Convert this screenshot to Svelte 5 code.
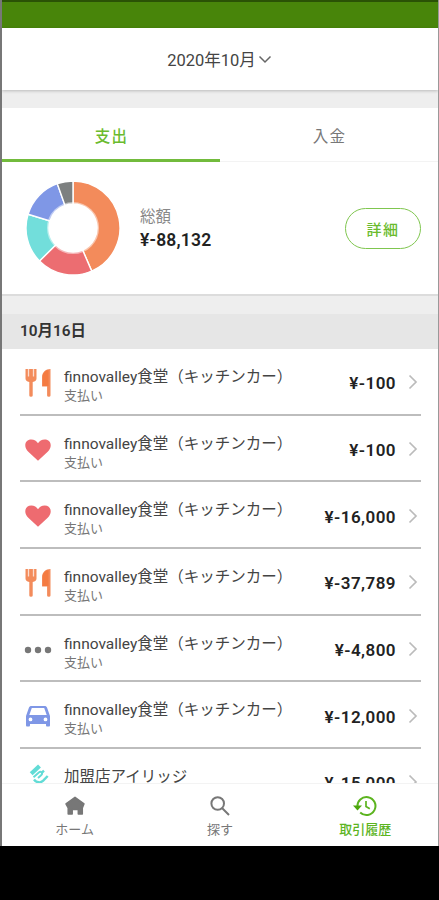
<script lang="ts">
  type IconName = 'meal' | 'heart' | 'dots' | 'car' | 'hand';

  interface Transaction {
    icon: IconName;
    name: string;
    kind?: string;
    amount: string;
  }

  const SHOP = 'finnovalley食堂（キッチンカー）';
  const PAYMENT = '支払い';

  const transactions: Transaction[] = [
    { icon: 'meal', name: SHOP, kind: PAYMENT, amount: '¥-100' },
    { icon: 'heart', name: SHOP, kind: PAYMENT, amount: '¥-100' },
    { icon: 'heart', name: SHOP, kind: PAYMENT, amount: '¥-16,000' },
    { icon: 'meal', name: SHOP, kind: PAYMENT, amount: '¥-37,789' },
    { icon: 'dots', name: SHOP, kind: PAYMENT, amount: '¥-4,800' },
    { icon: 'car', name: SHOP, kind: PAYMENT, amount: '¥-12,000' },
    { icon: 'hand', name: '加盟店アイリッジ', amount: '¥-15,000' },
  ];

  // Slice boundaries in degrees, clockwise from the top.
  const slices = [
    { from: 0, to: 156.5, color: '#f38b5b' },
    { from: 156.5, to: 225.5, color: '#ec6d71' },
    { from: 225.5, to: 287, color: '#72dedb' },
    { from: 287, to: 340.5, color: '#7f97e6' },
    { from: 340.5, to: 360, color: '#7d8080' },
  ];

  function point(deg: number, r: number) {
    const a = (deg * Math.PI) / 180;
    return `${47 + r * Math.sin(a)} ${47 - r * Math.cos(a)}`;
  }

  function arc(from: number, to: number) {
    return `M${point(from, 47)}A47 47 0 0 1 ${point(to, 47)}L${point(to, 24)}A24 24 0 0 0 ${point(from, 24)}Z`;
  }

  let tab = $state('out');
</script>

<div class="phone">
  <div class="status-bar"></div>
  <header class="month">
    <span>2020年10月</span>
    <svg width="14" height="9" viewBox="0 0 14 9"><path d="M1.5 1.5 7 7l5.5-5.5" fill="none" stroke="#666" stroke-width="1.5" /></svg>
  </header>

  <div class="tabs">
    <button class:active={tab === 'out'} onclick={() => (tab = 'out')}>支出</button>
    <button class:active={tab === 'in'} onclick={() => (tab = 'in')}>入金</button>
  </div>

  <section class="summary">
    <svg class="donut" width="94" height="94" viewBox="0 0 94 94">
      {#each slices as s}
        <path d={arc(s.from, s.to)} fill={s.color} stroke="#fff" stroke-width="1.4" />
      {/each}
      <circle cx="47" cy="47" r="24.5" fill="none" stroke="#fff" stroke-opacity="0.5" stroke-width="3" />
    </svg>
    <div class="total">
      <span class="total-label">総額</span>
      <span class="total-value">¥-88,132</span>
    </div>
    <button class="detail">詳細</button>
  </section>

  <h2 class="date">10月16日</h2>

  <ul class="list">
    {#each transactions as t}
      <li class="row">
        <span class="icon">
          {#if t.icon === 'meal'}
            <svg width="28" height="30" viewBox="0 0 28 30" fill="#f38b5b">
              <path d="M1.5 1h11v9.500c0 2-1.200 3-3.800 3.500v13.500q0 1.300-1.700 1.300t-1.700-1.300V14c-2.600-.5-3.800-1.500-3.800-3.500z" />
              <path d="M4.500 1v7.500M9.500 1v7.500" stroke="#fff" stroke-opacity="0.7" stroke-width="1.300" />
              <path d="M26.500 1v26.500q0 1.300-1.700 1.300t-1.700-1.300V18.500h-5V9c0-4.500 3.500-8 8.400-8z" />
              <path d="M24.500 2v16h-6V9c0-3.500 2.500-6.500 6-7z" fill="#f47b42" />
            </svg>
          {:else if t.icon === 'heart'}
            <svg width="28" height="24" viewBox="0 0 28 24" fill="#ee6b70">
              <path d="M14 22.8 4.300 13.800C-.8 9 .8 1.500 7.300 1.500c3 0 5.300 1.500 6.700 3.700 1.400-2.200 3.700-3.700 6.700-3.700 6.500 0 8.100 7.500 3 12.300z" />
            </svg>
          {:else if t.icon === 'dots'}
            <svg width="28" height="8" viewBox="0 0 28 8" fill="#777">
              <circle cx="4" cy="4" r="3.200" /><circle cx="14" cy="4" r="3.200" /><circle cx="24" cy="4" r="3.200" />
            </svg>
          {:else if t.icon === 'car'}
            <svg width="26" height="22" viewBox="0 0 26 22" fill="#7f97e6">
              <path fill-rule="evenodd" d="M6.500 1h13c1.300 0 2.200.6 2.600 1.800L25 11v9.300c0 .8-.5 1.200-1.200 1.200h-1.600c-.7 0-1.200-.4-1.200-1.200V19H5v1.300c0 .8-.5 1.200-1.200 1.200H2.200c-.7 0-1.200-.4-1.200-1.200V11l2.900-8.200C4.300 1.600 5.200 1 6.500 1zm.3 2L4.300 10h17.400l-2.500-7zM5.500 12.500a1.900 1.900 0 1 0 0 3.800 1.900 1.900 0 0 0 0-3.800zm15 0a1.900 1.900 0 1 0 0 3.800 1.900 1.900 0 0 0 0-3.800z" />
            </svg>
          {:else}
            <svg class="hand" width="20" height="20" viewBox="0 0 20 20" fill="none" stroke="#62dcd6">
              <path d="M2.200 9.800 10.500 2" stroke-width="4.200" />
              <path d="m4.500 13.200 5.300-4.700q1.700-1.300 2.800 0t-.5 2.700L9 14" stroke-width="1.900" />
              <path d="M5 15.500c2.700 3.600 6.700 3.500 9.200 1.200l4.500-4.700M12.500 9l2.500-2.300" stroke-width="2.400" />
            </svg>
          {/if}
        </span>
        <div class="info">
          <span class="name">{t.name}</span>
          <span class="kind">{t.kind ?? ''}</span>
        </div>
        <span class="amount">{t.amount}</span>
        <svg class="chevron" width="10" height="16" viewBox="0 0 10 16"><path d="m1.500 1.500 6.500 6.500-6.500 6.500" fill="none" stroke="#bbb" stroke-width="1.700" /></svg>
      </li>
    {/each}
  </ul>

  <nav class="nav">
    <a href="#home">
      <svg width="24" height="24" viewBox="0 0 24 24"><path d="M12 3.300 21 9.800l-1.700 4.200v6h-4v-4.500H9.200V20h-4v-6L3 9.800z" fill="#777" stroke="#777" stroke-width="1.500" stroke-linejoin="round" /></svg>
      ホーム
    </a>
    <a href="#search">
      <svg width="24" height="24" viewBox="0 0 24 24"><path d="M14.500 14.500 21 21M16 9.500a6.300 6.300 0 1 1-12.600 0 6.300 6.300 0 0 1 12.600 0z" fill="none" stroke="#777" stroke-width="2" /></svg>
      探す
    </a>
    <a href="#history" class="current">
      <svg width="24" height="24" viewBox="0 0 24 24">
        <path d="M4.500 13a9 9 0 1 1 2.700 5.500" fill="none" stroke="#5cb41f" stroke-width="2" />
        <path d="M0 11.500h9l-4.500 5z" fill="#4ca60c" />
        <path d="M13 7v5.500l3.800 2.300" fill="none" stroke="#5cb41f" stroke-width="1.700" />
      </svg>
      取引履歴
    </a>
  </nav>
</div>

<style>
  :global(body) {
    margin: 0;
    background: #000;
  }

  .phone {
    box-sizing: border-box;
    display: flex;
    flex-direction: column;
    width: 439px;
    height: 846px;
    overflow: hidden;
    border-left: 2px solid #777;
    border-right: 1px solid #999;
    background: #eee;
    color: #444;
    font-family: Roboto, 'Noto Sans CJK JP', sans-serif;
  }

  button {
    padding: 0;
    border: 0;
    background: none;
    font: inherit;
  }

  .status-bar {
    flex: none;
    box-sizing: border-box;
    height: 28px;
    border-top: 2px solid #2a5205;
    background: #48850a;
  }

  .month {
    flex: none;
    display: flex;
    align-items: center;
    justify-content: center;
    gap: 2px;
    height: 62px;
    padding-right: 1px;
    box-sizing: border-box;
    background: #fff;
    box-shadow: 0 1px 3px rgba(0, 0, 0, 0.22);
    font-size: 16.5px;
  }

  .tabs {
    flex: none;
    display: flex;
    height: 54px;
    margin-top: 18px;
    background: #fff;
  }

  .tabs button {
    flex: 1;
    box-sizing: border-box;
    padding-left: 1px;
    border-bottom: 1px solid #f3f3f3;
    color: #777;
    font-size: 15.5px;
    letter-spacing: 1.3px;
  }

  .tabs .active {
    padding-top: 3px;
    border-bottom: 3px solid #72bb3c;
    color: #6abb2e;
    font-weight: 500;
  }

  .summary {
    flex: none;
    display: flex;
    align-items: center;
    box-sizing: border-box;
    height: 134px;
    padding: 0 17px 0 24px;
    border-bottom: 2px solid #dcdcdc;
    background: #fff;
  }

  .total {
    display: flex;
    flex: 1;
    flex-direction: column;
    margin: 2px 0 0 20px;
  }

  .total-label {
    color: #888;
    font-size: 15.5px;
    line-height: 23px;
  }

  .total-value {
    color: #222;
    font-size: 17.5px;
    font-weight: 600;
    letter-spacing: 0.2px;
    line-height: 23px;
  }

  .detail {
    box-sizing: border-box;
    width: 76px;
    height: 41px;
    border: 1.5px solid #7fc64f;
    border-radius: 21px;
    color: #6abb2e;
    font-size: 15px;
    font-weight: 500;
    letter-spacing: 1.5px;
  }

  .date {
    flex: none;
    height: 35px;
    margin: 18px 0 0;
    padding-left: 18px;
    background: #e6e6e6;
    color: #333;
    font-size: 15.4px;
    font-weight: 600;
    line-height: 35px;
  }

  .list {
    flex: 1;
    min-height: 0;
    overflow: hidden;
    margin: 0;
    padding: 0 17px 0 18px;
    background: #fff;
    list-style: none;
  }

  .row {
    display: flex;
    align-items: center;
    box-sizing: border-box;
    height: 66.7px;
    border-bottom: 2px solid #bdbdbd;
  }

  .icon {
    display: flex;
    justify-content: center;
    width: 35px;
    padding-top: 3px;
  }

  .hand {
    margin: -18px 0 0 3px;
  }

  .info {
    display: flex;
    flex: 1;
    flex-direction: column;
    margin: 9px 0 0 9px;
    white-space: nowrap;
  }

  .name {
    font-size: 15.5px;
    line-height: 20px;
  }

  .kind {
    height: 18px;
    color: #777;
    font-size: 13px;
    line-height: 18px;
  }

  .amount {
    padding-top: 4px;
    color: #222;
    font-size: 17px;
    font-weight: 600;
    letter-spacing: 0.45px;
  }

  .chevron {
    margin: 2px 3px 0 12px;
  }

  .nav {
    flex: none;
    display: flex;
    box-sizing: border-box;
    height: 63px;
    padding-top: 10px;
    border-top: 1px solid #f3f3f3;
    background: #fff;
  }

  .nav a {
    display: flex;
    flex: 1;
    flex-direction: column;
    align-items: center;
    color: #777;
    font-size: 13px;
    line-height: 23px;
    text-decoration: none;
  }

  .nav .current {
    color: #5cb41f;
    font-weight: 500;
  }
</style>
